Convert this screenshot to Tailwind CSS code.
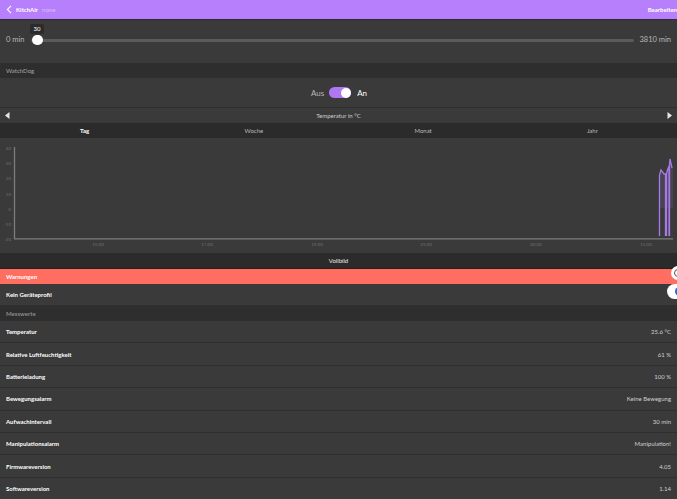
<!DOCTYPE html>
<html lang="de">
<head>
  <meta charset="UTF-8" />
  <meta name="viewport" content="width=device-width, initial-scale=1.0" />
  <title>KitchAir</title>
  <script src="https://cdn.jsdelivr.net/npm/@tailwindcss/browser@4"></script>
</head>
<body class="relative h-[499px] w-[677px] overflow-hidden bg-[#3a3a3a] font-['Lato',sans-serif] text-[6px] text-[#d0d0d0]">

  <!-- header -->
  <header class="flex h-[20px] items-center justify-between border-b border-[#33273f] bg-[#b77ffb] pl-[6px] text-white">
    <div class="flex items-center">
      <svg width="6" height="9" viewBox="0 0 6 9" fill="none" stroke="#fff" stroke-width="1.100"><path d="M5 .8 1.400 4.500 5 8.200" /></svg>
      <span class="ml-[4px] font-bold">KitchAir</span>
      <span class="ml-[4px] text-[#d9c0fb]">none</span>
    </div>
    <span class="font-bold">Bearbeiten</span>
  </header>

  <!-- slider -->
  <section class="flex h-[43px] items-center px-[6px] pb-[3px] text-[7.500px] text-[#b9b9b9]">
    <span class="w-[25px]">0 min</span>
    <div class="relative h-[3px] flex-1 rounded-full bg-[#5b5b5b]">
      <div class="absolute left-[0.500px] top-[-3.500px] h-[10px] w-[11px] rounded-full bg-white"></div>
      <div class="absolute left-[-1px] top-[-15px] flex h-[10px] w-[14px] items-center justify-center rounded-[2px] bg-[#2b2b2b] text-[6px] text-white">30</div>
    </div>
    <span class="ml-[6px]">3810 min</span>
  </section>

  <div class="flex h-[15px] items-center bg-[#2e2e2e] px-[6px] text-[#a5a5a5]">WatchDog</div>

  <!-- toggle -->
  <section class="flex h-[30px] items-center justify-center border-b border-[#2f2f2f] pl-[1px] text-[8px]">
    <span class="text-[#b9b9b9]">Aus</span>
    <div class="ml-[5px] flex h-[11px] w-[22px] items-center justify-end rounded-full bg-[#b077f2]">
      <div class="h-[10px] w-[10px] rounded-full bg-white"></div>
    </div>
    <span class="ml-[6px] text-white">An</span>
  </section>

  <div class="flex h-[15px] items-center justify-between px-[5px]">
    <svg width="5" height="7" viewBox="0 0 5 7" fill="#e6e6e6"><path d="M4.500 0v7L0 3.500z" /></svg>
    <span>Temperatur in °C</span>
    <svg width="5" height="7" viewBox="0 0 5 7" fill="#e6e6e6"><path d="M.5 0v7L5 3.500z" /></svg>
  </div>

  <div class="grid h-[15px] grid-cols-4 items-center bg-[#2b2b2b] text-center text-[#b9b9b9]">
    <span class="font-bold text-white">Tag</span>
    <span>Woche</span>
    <span>Monat</span>
    <span>Jahr</span>
  </div>

  <!-- chart -->
  <svg class="block" width="677" height="115" viewBox="0 138 677 115" font-size="4.500" fill="#6f6f6f">
    <g text-anchor="end">
      <text x="11" y="150">40</text>
      <text x="11" y="165">30</text>
      <text x="11" y="180">20</text>
      <text x="11" y="196">10</text>
      <text x="11" y="211">0</text>
      <text x="11" y="226">-10</text>
      <text x="11" y="241">-20</text>
    </g>
    <g text-anchor="middle">
      <text x="98" y="246">15:00</text>
      <text x="207" y="246">17:00</text>
      <text x="317" y="246">19:00</text>
      <text x="426" y="246">21:00</text>
      <text x="536" y="246">00:00</text>
      <text x="646" y="246">15:00</text>
    </g>
    <path d="M14.500 147V239M14 238.800H673" stroke="#7d7d7d" stroke-width="1.300" fill="none" />
    <path d="M659 208V175L661 170 664 174 666 174 667 170 670 159 673 168V208Z" fill="#a77ce0" fill-opacity=".14" />
    <path d="M659.500 236V175L661 170 664 174 665.500 174V236M666.500 236V174L667.500 170 669 166V236M669.500 236V165L670 159 672 168" fill="none" stroke="#a67ae6" stroke-width="1.300" />
  </svg>

  <div class="flex h-[15px] items-center justify-center bg-[#2b2b2b] text-[#e8e8e8]">Vollbild</div>

  <div class="flex h-[16px] items-center border-t border-[#231f1f] bg-[#ff6e61] px-[6px] font-bold text-white">Warnungen</div>

  <div class="flex h-[22px] items-center border-b border-[#2f2f2f] px-[6px] font-bold text-white">Kein Geräteprofil</div>

  <div class="flex h-[15px] items-center bg-[#2e2e2e] px-[6px] font-bold text-[#8b8b8b]">Messwerte</div>

  <!-- values -->
  <div class="flex h-[22.400px] items-center justify-between border-b border-[#2f2f2f] px-[6px]"><span class="font-bold text-white">Temperatur</span><span>25.6 °C</span></div>
  <div class="flex h-[22.400px] items-center justify-between border-b border-[#2f2f2f] px-[6px]"><span class="font-bold text-white">Relative Luftfeuchtigkeit</span><span>61 %</span></div>
  <div class="flex h-[22.400px] items-center justify-between border-b border-[#2f2f2f] px-[6px]"><span class="font-bold text-white">Batterieladung</span><span>100 %</span></div>
  <div class="flex h-[22.400px] items-center justify-between border-b border-[#2f2f2f] px-[6px]"><span class="font-bold text-white">Bewegungsalarm</span><span>Keine Bewegung</span></div>
  <div class="flex h-[22.400px] items-center justify-between border-b border-[#2f2f2f] px-[6px]"><span class="font-bold text-white">Aufwachintervall</span><span>30 min</span></div>
  <div class="flex h-[22.400px] items-center justify-between border-b border-[#2f2f2f] px-[6px]"><span class="font-bold text-white">Manipulationsalarm</span><span>Manipulation!</span></div>
  <div class="flex h-[22.400px] items-center justify-between border-b border-[#2f2f2f] px-[6px]"><span class="font-bold text-white">Firmwareversion</span><span>4.05</span></div>
  <div class="flex h-[22.400px] items-center justify-between border-b border-[#2f2f2f] px-[6px]"><span class="font-bold text-white">Softwareversion</span><span>1.14</span></div>

  <!-- floating page widgets at the right edge -->
  <div class="absolute left-[671px] top-[266px] h-[14px] w-[14px] rounded-full bg-white">
    <div class="ml-[3px] mt-[3px] h-[8px] w-[8px] rounded-full border-[1.500px] border-[#555]"></div>
  </div>
  <div class="absolute left-[667px] top-[284px] h-[15px] w-[20px] rounded-full bg-white">
    <div class="ml-[8px] mt-[3px] h-[9px] w-[9px] rounded-full bg-[#1f6fd1]"></div>
  </div>
</body>
</html>
